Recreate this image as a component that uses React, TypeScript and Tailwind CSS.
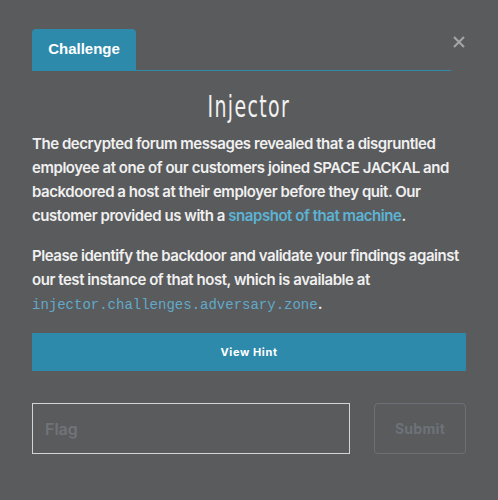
import React from "react";

export default function App() {
    return (
        <div className="min-h-screen w-full bg-[#5a5b5d] px-8 pt-[29px]" style={{ fontFamily: "Inter, 'Liberation Sans', sans-serif" }}>
            <div className="flex items-start">
                <div className="flex-1 border-b border-[#2e8aab]">
                    <div className="inline-flex h-[41px] w-[104px] items-center justify-center rounded-t-[4px] bg-[#2e8aab] text-[15px] font-bold text-white" style={{ fontFamily: "'Liberation Sans', Arial, sans-serif" }}>
                        Challenge
                    </div>
                </div>
                <button className="ml-[1px] mt-[6px] flex h-[14px] w-[14px] items-center justify-center">
                    <svg width="12" height="12" viewBox="0 0 12 12">
                        <path d="M1 1 L11 11 M11 1 L1 11" stroke="#a3a4a6" strokeWidth="2.2" />
                    </svg>
                </button>
            </div>

            <h2 className="mt-[17px] text-center text-[31px] leading-[36px] tracking-[2px] text-[#f2f2f2]" style={{ fontFamily: "'DejaVu Sans Condensed', 'DejaVu Sans', sans-serif" }}>
                <span className="inline-block scale-x-[0.68]">Injector</span>
            </h2>

            <div className="mt-[8px] text-[15px] font-semibold leading-[24px] tracking-[-0.45px] text-[#f0f0f0]">
                <p>
                    The decrypted forum messages revealed that a disgruntled employee at one of our customers joined SPACE JACKAL and backdoored a host at their employer before they quit. Our customer provided us with a <a href="#" className="text-[#5cb3d4]">snapshot of that machine</a>.
                </p>
                <p className="mt-4">
                    Please identify the backdoor and validate your findings against our test instance of that host, which is available at{" "}
                    <code className="text-[14px] font-normal tracking-normal text-[#62a9c9]" style={{ fontFamily: "'Liberation Mono', monospace" }}>injector.challenges.adversary.zone</code>.
                </p>
            </div>

            <button className="mt-[16px] flex h-[38px] w-full items-center justify-center bg-[#2e8aab] text-[11px] font-bold tracking-[0.6px] text-white">
                View Hint
            </button>

            <div className="mt-[32px] flex items-center gap-6">
                <input
                    placeholder="Flag"
                    className="h-[51px] w-[318px] border border-[#d4d4d4] bg-transparent px-3 text-[16px] font-semibold text-white placeholder:text-[#707479] outline-none"
                />
                <button className="h-[51px] flex-1 rounded-[4px] border border-[#6b7076] text-[14px] font-bold tracking-[0.3px] text-[#6d7278]">
                    Submit
                </button>
            </div>
        </div>
    );
}
